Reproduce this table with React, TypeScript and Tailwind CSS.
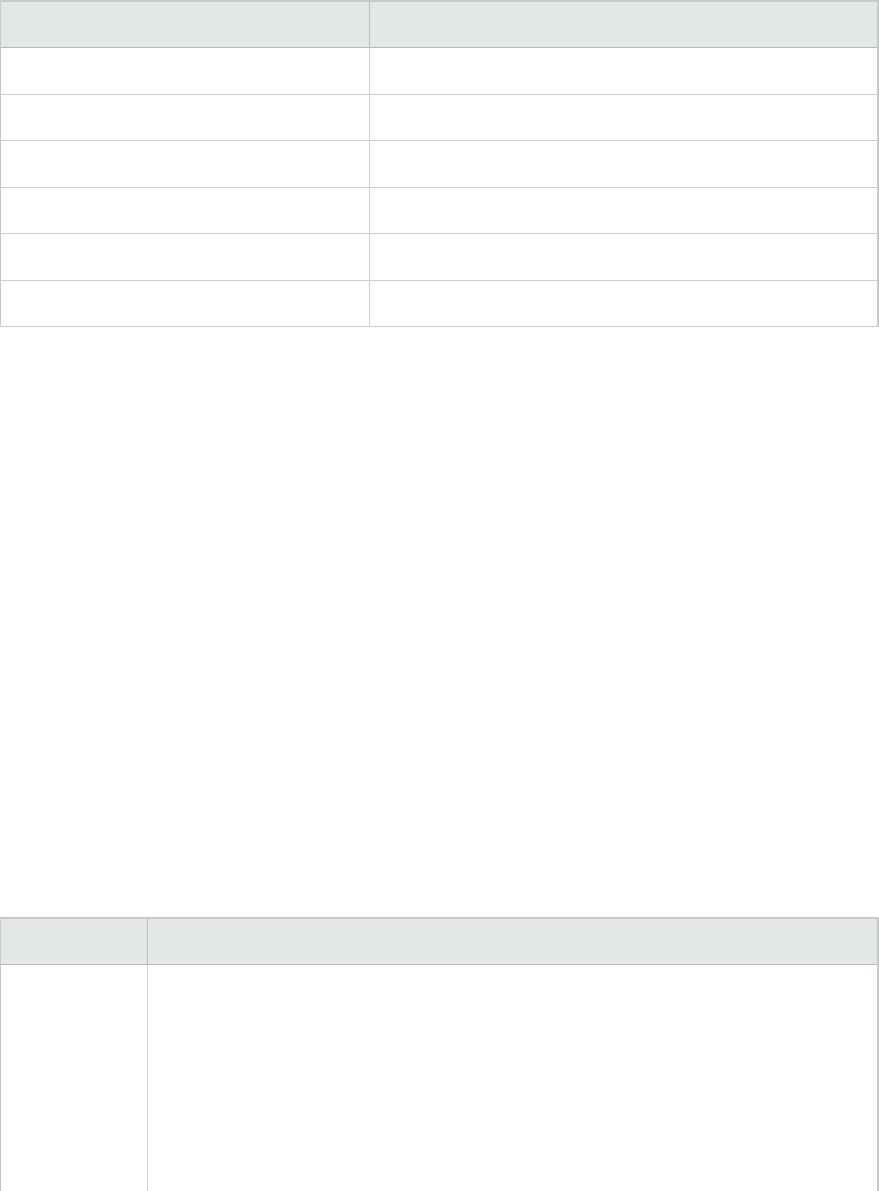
import React from 'react';

const rows = [0, 1, 2, 3, 4, 5];

export default function App() {
  return (
    <div className="w-[879px] bg-white font-['Liberation_Sans',sans-serif]">
      {/* first table */}
      <div className="border-t-2 border-l border-r-2 border-[#c8c8c8]">
        <div className="flex h-[46px] bg-[#e3e7e8] border-b border-[#b9b9b9]">
          <div className="w-[369px] border-r border-[#bdbdbd]" />
          <div className="flex-1" />
        </div>
        {rows.map((r) => (
          <div key={r} className="flex h-[46.5px] border-b border-[#cccccc]">
            <div className="w-[369px] border-r border-[#cfcfcf]" />
            <div className="flex-1" />
          </div>
        ))}
      </div>

      <div className="h-[590px]" />

      {/* second table */}
      <div className="border-t-2 border-l border-r-2 border-[#c8c8c8]">
        <div className="flex h-[46px] bg-[#e3e7e8] border-b border-[#b9b9b9]">
          <div className="w-[147px] border-r border-[#bdbdbd]" />
          <div className="flex-1" />
        </div>
        <div className="flex h-[240px]">
          <div className="w-[147px] border-r border-[#cfcfcf]" />
          <div className="flex-1" />
        </div>
      </div>
    </div>
  );
}
